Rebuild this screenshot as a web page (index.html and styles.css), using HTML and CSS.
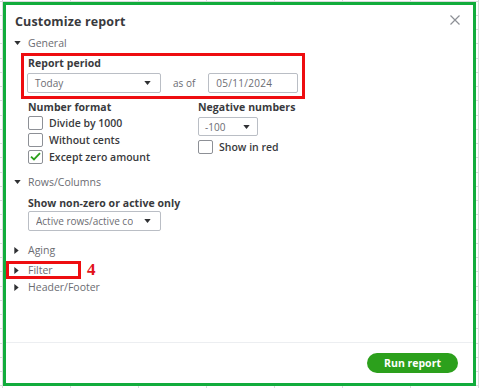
FILE: index.html
```html
<!DOCTYPE html>
<html lang="en">
<head>
    <meta charset="UTF-8">
    <meta name="viewport" content="width=device-width, initial-scale=1.0">
    <title>Customize report</title>
    <link rel="stylesheet" href="styles.css">
</head>
<body>
    <div class="frame">
        <div class="dialog-body">
            <div class="title-bar">
                <h1>Customize report</h1>
                <button class="close-button" aria-label="Close">
                    <svg viewBox="0 0 10 10"><path d="M0.5 0.5 L9.5 9.5 M9.5 0.5 L0.5 9.5" /></svg>
                </button>
            </div>

            <div class="section-toggle">
                <svg class="caret-down" viewBox="0 0 8 5"><path d="M0 0 H8 L4 5 Z" /></svg>
                <span>General</span>
            </div>

            <div class="highlight period-box">
                <div class="field-label">Report period</div>
                <div class="period-row">
                    <div class="select period-select">
                        <span>Today</span>
                        <svg class="select-caret" viewBox="0 0 8 5"><path d="M0 0 H8 L4 5 Z" /></svg>
                    </div>
                    <span class="as-of">as of</span>
                    <div class="text-input">05/11/2024</div>
                </div>
            </div>

            <div class="format-grid">
                <div class="format-col">
                    <div class="field-label">Number format</div>
                    <label class="check-row">
                        <span class="checkbox"></span>
                        <span>Divide by 1000</span>
                    </label>
                    <label class="check-row">
                        <span class="checkbox"></span>
                        <span>Without cents</span>
                    </label>
                    <label class="check-row">
                        <span class="checkbox checked">
                            <svg viewBox="0 0 12 10"><path d="M1 5.2 L4.3 8.3 L11 1.2" /></svg>
                        </span>
                        <span>Except zero amount</span>
                    </label>
                </div>
                <div class="format-col">
                    <div class="field-label">Negative numbers</div>
                    <div class="select negative-select">
                        <span>-100</span>
                        <svg class="select-caret" viewBox="0 0 8 5"><path d="M0 0 H8 L4 5 Z" /></svg>
                    </div>
                    <label class="check-row red-row">
                        <span class="checkbox"></span>
                        <span>Show in red</span>
                    </label>
                </div>
            </div>

            <div class="section-toggle rows-toggle">
                <svg class="caret-down" viewBox="0 0 8 5"><path d="M0 0 H8 L4 5 Z" /></svg>
                <span>Rows/Columns</span>
            </div>

            <div class="field-label nonzero-label">Show non-zero or active only</div>
            <div class="select active-select">
                <span class="clip">Active rows/active columns</span>
                <svg class="select-caret" viewBox="0 0 8 5"><path d="M0 0 H8 L4 5 Z" /></svg>
            </div>

            <div class="section-toggle collapsed aging-toggle">
                <svg class="caret-right" viewBox="0 0 5 8"><path d="M0 0 V8 L5 4 Z" /></svg>
                <span>Aging</span>
            </div>
            <div class="filter-row">
                <div class="highlight filter-box">
                    <svg class="caret-right" viewBox="0 0 5 8"><path d="M0 0 V8 L5 4 Z" /></svg>
                    <span>Filter</span>
                </div>
                <span class="step-number">4</span>
            </div>
            <div class="section-toggle collapsed footer-toggle">
                <svg class="caret-right" viewBox="0 0 5 8"><path d="M0 0 V8 L5 4 Z" /></svg>
                <span>Header/Footer</span>
            </div>
        </div>

        <div class="dialog-footer">
            <button class="run-button">Run report</button>
        </div>
    </div>
</body>
</html>
```

FILE: styles.css
```css
:root {
    --frame-green: #12ac3c;
    --mark-red: #ee0d10;
    --qb-green: #2ca01c;
    --text-dark: #393a3d;
    --text-muted: #6b6c72;
    --border-color: #babec5;
}

* {
    margin: 0;
    padding: 0;
    box-sizing: border-box;
}

html, body {
    height: 388px;
    overflow: hidden;
}

body {
    font-family: "Open Sans", "DejaVu Sans", sans-serif;
    color: var(--text-dark);
    background-color: #fff;
    background-image:
        repeating-linear-gradient(90deg, transparent 0 2px, #d9dadc 2px 3px, transparent 3px 68px),
        repeating-linear-gradient(180deg, transparent 0 0.75px, #d9dadc 0.75px 1.75px, transparent 1.75px 14.25px);
    padding: 2px 0 0 3px;
}

.frame {
    width: 473px;
    height: 384px;
    border: 3px solid var(--frame-green);
    background: #fff;
    display: flex;
    flex-direction: column;
}

.dialog-body {
    flex: 1;
    padding: 0 0 0 8px;
}

.title-bar {
    height: 32px;
    display: flex;
    align-items: center;
    justify-content: space-between;
    padding-right: 12px;
}

.title-bar h1 {
    font-size: 12.5px;
    font-weight: 700;
    margin-left: 1px;
    letter-spacing: 0.15px;
}

.close-button {
    background: none;
    border: none;
    width: 11px;
    height: 11px;
    display: flex;
    margin-top: -2px;
}

.close-button svg {
    width: 10px;
    height: 10px;
    stroke: #8d9096;
    stroke-width: 1.2;
    fill: none;
}

.section-toggle {
    display: flex;
    align-items: center;
    height: 12px;
    font-size: 10.5px;
    color: var(--text-muted);
}

.section-toggle span {
    margin-left: 7px;
}

.caret-down {
    width: 7px;
    height: 4px;
    fill: #2f3033;
}

.caret-right {
    width: 5px;
    height: 7px;
    fill: #2f3033;
}

.collapsed span {
    margin-left: 9px;
}

.highlight {
    border: 3px solid var(--mark-red);
}

.period-box {
    width: 284px;
    margin: 4px 0 0 7px;
    padding: 0 0 3px 4px;
}

.field-label {
    font-size: 10.5px;
    font-weight: 700;
    line-height: 14px;
    letter-spacing: 0.05px;
}

.period-row {
    display: flex;
    align-items: center;
    margin-top: 3px;
    white-space: nowrap;
}

.period-row > * {
    flex-shrink: 0;
}

.select {
    display: flex;
    align-items: center;
    justify-content: space-between;
    height: 20px;
    border: 1px solid var(--border-color);
    border-radius: 2px;
    padding: 0 9px 0 7px;
    font-size: 10px;
    color: var(--text-muted);
}

.select-caret {
    width: 7px;
    height: 4px;
    fill: #2f3033;
    flex-shrink: 0;
}

.period-select {
    width: 134px;
    margin-left: -1px;
}

.as-of {
    font-size: 10px;
    color: var(--text-muted);
    margin-left: 12px;
}

.text-input {
    width: 90px;
    height: 20px;
    margin-left: 13px;
    border: 1px solid var(--border-color);
    border-radius: 2px;
    padding-left: 7px;
    font-size: 10px;
    line-height: 18px;
    color: var(--text-muted);
    letter-spacing: 0.3px;
}

.format-grid {
    display: grid;
    grid-template-columns: 170px auto;
    margin: 1px 0 0 14px;
}

.check-row {
    display: flex;
    align-items: center;
    height: 17px;
    font-size: 10.5px;
    font-weight: 600;
}

.checkbox {
    width: 15px;
    height: 14px;
    border: 1px solid #8d9096;
    border-radius: 2px;
    margin-right: 6px;
    display: flex;
    align-items: center;
    justify-content: center;
}

.checkbox svg {
    width: 11px;
    height: 9px;
    stroke: var(--qb-green);
    stroke-width: 2;
    fill: none;
}

.negative-select {
    width: 60px;
    margin-top: 3px;
    height: 19px;
    padding: 0 7px 0 6px;
}

.red-row {
    height: 20px;
    margin-top: 1px;
}

.rows-toggle {
    margin-top: 11px;
}

.nonzero-label {
    margin: 8px 0 0 14px;
}

.active-select {
    width: 133px;
    margin: 1px 0 0 14px;
    padding: 0 9px 0 7px;
}

.clip {
    width: 97px;
    overflow: hidden;
    white-space: nowrap;
}

.aging-toggle {
    height: 18px;
    margin-top: 10px;
}

.filter-row {
    display: flex;
    align-items: center;
    margin: 2px 0 0 -8px;
}

.filter-box {
    width: 75px;
    height: 18px;
    display: flex;
    align-items: center;
    padding-left: 5px;
    font-size: 10.5px;
    color: var(--text-muted);
}

.filter-box span {
    margin-left: 9px;
}

.step-number {
    font-family: "Liberation Serif", serif;
    font-weight: 700;
    font-size: 17px;
    color: #e2121a;
    margin-left: 6px;
    line-height: 18px;
}

.footer-toggle {
    height: 16px;
}

.dialog-footer {
    height: 41px;
    border-top: 1px solid #eceef1;
    display: flex;
    align-items: center;
    justify-content: flex-end;
    padding-right: 15px;
}

.run-button {
    width: 91px;
    height: 20px;
    border: none;
    border-radius: 10px;
    background-color: var(--qb-green);
    color: #fff;
    font-family: inherit;
    font-size: 10.5px;
    font-weight: 700;
    cursor: pointer;
}
```
